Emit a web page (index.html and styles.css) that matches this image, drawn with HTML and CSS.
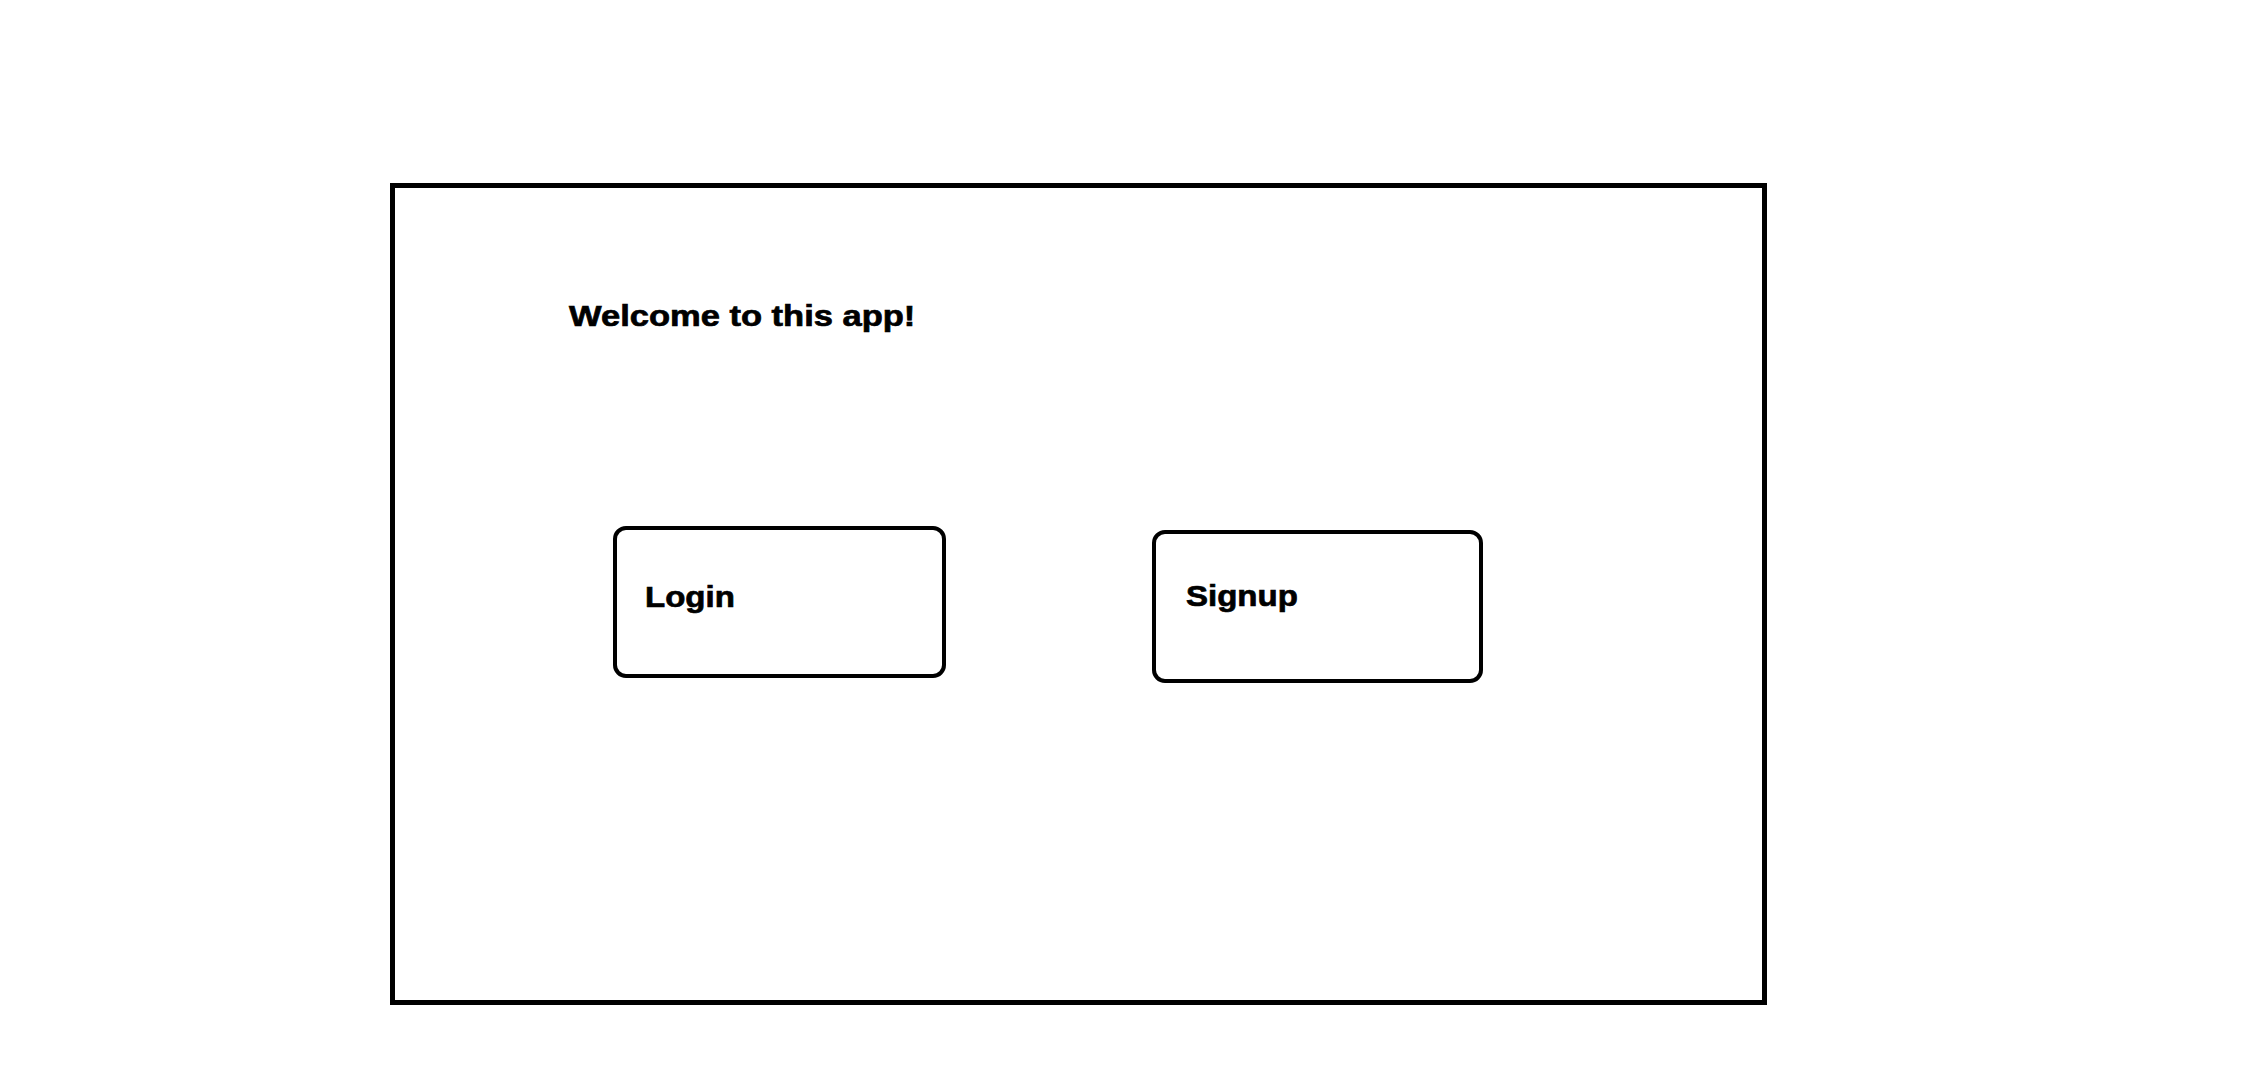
FILE: index.html
```html
<!DOCTYPE html>
<html lang="en">
<head>
<meta charset="utf-8">
<title>Welcome</title>
<link rel="stylesheet" href="styles.css">
</head>
<body>
<main class="frame">
  <h1 class="title"><span class="stretch stretch-title">Welcome to this app!</span></h1>
  <div class="actions">
    <button class="btn btn-login" type="button"><span class="stretch stretch-btn">Login</span></button>
    <button class="btn btn-signup" type="button"><span class="stretch stretch-btn2">Signup</span></button>
  </div>
</main>
</body>
</html>
```
FILE: styles.css
```css
html, body {
  margin: 0;
  padding: 0;
  background: #ffffff;
}
body {
  font-family: "Liberation Sans", Arial, sans-serif;
  color: #000;
}
.frame {
  box-sizing: border-box;
  margin: 183px 0 0 390px;
  width: 1377px;
  height: 822px;
  border: 5px solid #000;
  padding: 113px 0 0 174px;
}
.title {
  margin: 0;
  font-size: 30px;
  font-weight: 700;
  line-height: 30px;
  white-space: nowrap;
}
.stretch {
  display: inline-block;
  transform-origin: left center;
  -webkit-text-stroke: 0.7px #000;
}
.stretch-title { transform: scaleX(1.15); }
.stretch-btn { transform: scaleX(1.1); }
.stretch-btn2 { transform: scaleX(1.1); }
.actions {
  display: flex;
  align-items: flex-start;
  gap: 206px;
  margin: 195px 0 0 44px;
}
.btn {
  box-sizing: border-box;
  display: flex;
  align-items: flex-start;
  margin: 0;
  background: #fff;
  border: 4px solid #000;
  border-radius: 13px;
  font-family: "Liberation Sans", Arial, sans-serif;
  font-size: 30px;
  font-weight: 700;
  line-height: 30px;
  color: #000;
  text-align: left;
  cursor: pointer;
}
.btn-login {
  width: 333px;
  height: 152px;
  padding: 52px 0 0 28px;
}
.btn-signup {
  width: 331px;
  height: 153px;
  margin-top: 4px;
  padding: 47px 0 0 30px;
}
```
